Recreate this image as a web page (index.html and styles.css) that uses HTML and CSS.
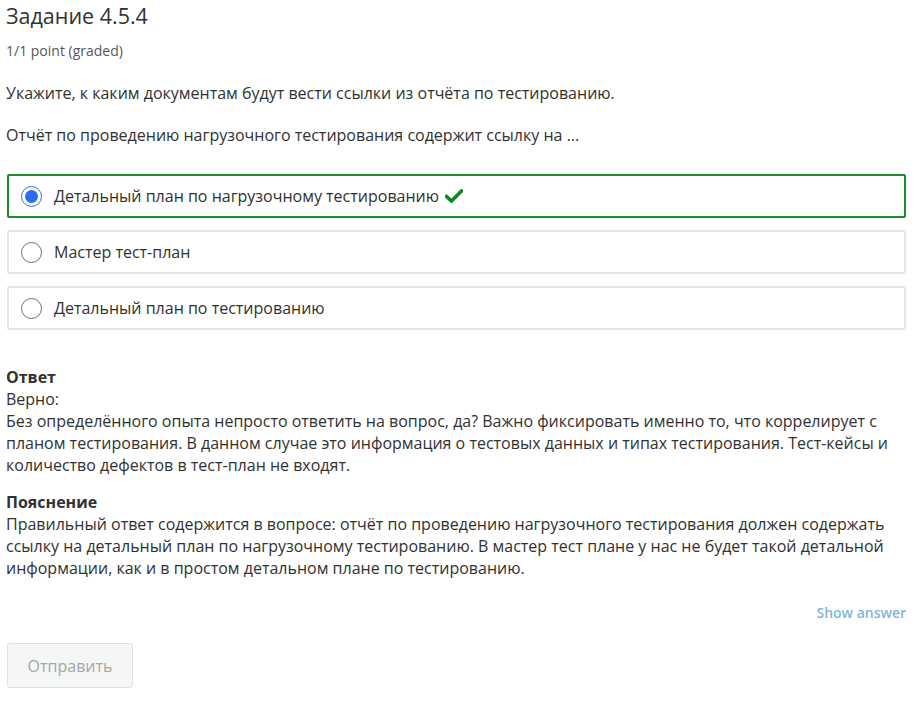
FILE: index.html
```html
<!DOCTYPE html>
<html lang="ru">
<head>
<meta charset="utf-8">
<link rel="stylesheet" href="styles.css">
</head>
<body>
<div class="page">
  <h2 class="title">Задание 4.5.4</h2>
  <div class="points">1/1 point (graded)</div>
  <p class="q">Укажите, к каким документам будут вести ссылки из отчёта по тестированию.</p>
  <p class="q q2">Отчёт по проведению нагрузочного тестирования содержит ссылку на ...</p>
  <div class="options">
    <label class="opt correct"><span class="radio on"></span><span>Детальный план по нагрузочному тестированию</span>
      <svg class="check" width="18" height="14" viewBox="0 0 18 14"><path d="M1.5 7.5 L6.5 12 L16.5 2" fill="none" stroke="#0a8a1e" stroke-width="3.6" stroke-linecap="square"/></svg>
    </label>
    <label class="opt"><span class="radio"></span><span>Мастер тест-план</span></label>
    <label class="opt"><span class="radio"></span><span>Детальный план по тестированию</span></label>
  </div>
  <div class="answer">
    <div class="h">Ответ</div>
    <div>Верно:</div>
    <div>Без определённого опыта непросто ответить на вопрос, да? Важно фиксировать именно то, что коррелирует с планом тестирования. В данном случае это информация о тестовых данных и типах тестирования. Тест-кейсы и количество дефектов в тест-план не входят.</div>
    <div class="h h2">Пояснение</div>
    <div>Правильный ответ содержится в вопросе: отчёт по проведению нагрузочного тестирования должен содержать ссылку на детальный план по нагрузочному тестированию. В мастер тест плане у нас не будет такой детальной информации, как и в простом детальном плане по тестированию.</div>
  </div>
  <div class="show"><span>Show answer</span></div>
  <button class="submit">Отправить</button>
</div>
</body>
</html>
```
FILE: styles.css
```css
html, body { margin: 0; background: #fff; }
body { font-family: "Open Sans", "Noto Sans", sans-serif; color: #313131; }
.page { padding: 0 11px 0 6px; }
.title { font-size: 21.5px; font-weight: 400; margin: 0; padding-top: 1px; line-height: 30px; color: #313131; }
.points { font-size: 14px; color: #575757; margin-top: 10px; line-height: 20px; }
.q { font-size: 16px; margin: 21px 0 0; line-height: 22px; }
.q2 { margin-top: 20px; }
.options { display: flex; flex-direction: column; gap: 12px; margin-top: 28px; margin-left: 1px; }
.opt { display: flex; align-items: center; height: 44px; box-sizing: border-box; border: 2px solid #e5e5e5; border-radius: 2px; padding-left: 12px; font-size: 16px; color: #313131; }
.opt.correct { border-color: #1d8a2b; }
.radio { width: 21px; height: 21px; border: 1px solid #6e6e6e; border-radius: 50%; box-sizing: border-box; margin-right: 12px; display: flex; align-items: center; justify-content: center; flex: none; }
.radio.on { border-color: #2a6cf5; border-width: 1.5px; }
.radio.on::after { content: ""; width: 13px; height: 13px; border-radius: 50%; background: #2a6cf5; }
.check { margin-left: 6px; margin-top: -1px; }
.answer { margin-top: 36px; font-size: 16px; line-height: 22px; }
.h { font-weight: 700; }
.h2 { margin-top: 15px; }
.show { display: flex; justify-content: flex-end; margin-top: 24px; font-size: 14px; color: #7fb7dc; font-weight: 600; }
.submit { display: block; margin-top: 21px; margin-left: 1px; width: 126px; height: 45px; background: #f5f6f6; border: 1px solid #e0e0e0; border-radius: 3px; font-family: "Open Sans", sans-serif; font-size: 16px; color: #a6a6a6; }
```
